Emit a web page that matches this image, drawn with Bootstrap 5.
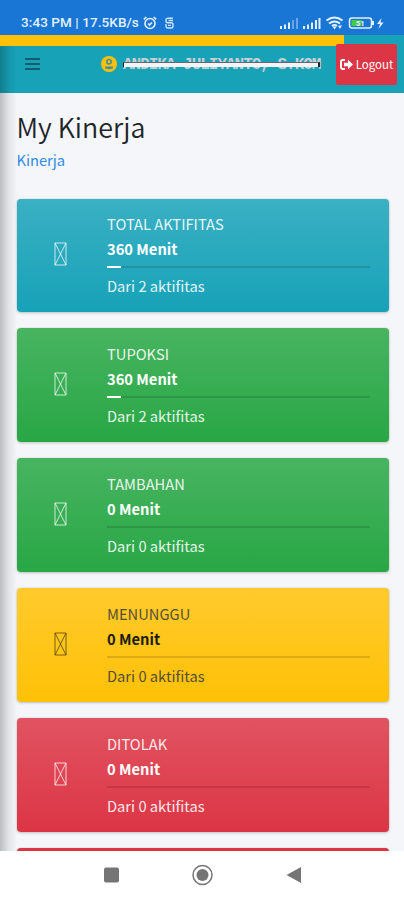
<!DOCTYPE html>
<html lang="id">
<head>
<meta charset="utf-8">
<meta name="viewport" content="width=device-width, initial-scale=1">
<title>My Kinerja</title>
<link href="https://cdn.jsdelivr.net/npm/bootstrap@5.3.0/dist/css/bootstrap.min.css" rel="stylesheet">
<style>
body{font-family:"Noto Sans CJK JP","Noto Sans",sans-serif;background:#f4f6f9;color:#212529;height:900px;overflow:hidden}
.screen{width:404px;height:900px;overflow:hidden}
.statusbar{height:35px;background:#1976d5;color:#e4f0fc;padding:10px 20px 0 21px;font:500 13.5px/25px Roboto,sans-serif}
.clock{letter-spacing:.08px;width:118px}
.statusbar svg{flex:none}
.sim{margin-left:8px}
.topbar{height:58px;background:#17a2b8}
.loading{left:0;top:0;width:344px;height:11px;background:#ffc107}
.menu-btn{margin-left:25px;width:15px;margin-bottom:1px}
.avatar{margin-left:61px}
.user-name{font:700 16px/20px "Liberation Mono",monospace;color:#c6cfd2;width:197px;height:20px;margin-left:6px;letter-spacing:-1.02px;padding-top:1px}
.redact{left:0;right:0;top:8px;height:5px;background:#f4f4f4;border-right:2px solid #222;border-left:1px solid #222;border-top:1px solid #667}
.logout{width:61px;height:41px;margin:0 7px 0 0;background:#dc3545;border-radius:2px;color:#fff;font-size:11.5px;line-height:20px}
.logout svg{margin-right:3px}
.content-area{height:758px;padding:0 15px 0 16.5px;background:#f4f6f9}
.edge{left:0;top:46px;width:17px;height:805px;background:linear-gradient(90deg,rgba(0,0,0,.23),rgba(0,0,0,.08) 50%,transparent)}
h1{font-size:26.8px;line-height:34px;font-weight:350;margin:0;padding-top:17px}
.crumb{font-size:14.7px;line-height:24px;color:#2f8be6;text-decoration:none;margin-top:4px;display:block}
.stats{margin-top:26.5px}
.info{height:113.5px;margin-bottom:16.4px;border-radius:4px;padding-left:90.5px;padding-right:19px;padding-top:12.5px;color:#fff;box-shadow:0 0 1px rgba(0,0,0,.3),0 1px 3px rgba(0,0,0,.2)}
.teal{background:linear-gradient(#3ab0c3,#17a2b8)}
.grn{background:linear-gradient(#48b461,#28a745)}
.ylw{background:linear-gradient(#ffca2c,#ffc107);color:#1f2d3d}
.rd{background:linear-gradient(#e15361,#dc3545)}
.info .soft{opacity:.88}
.ylw .soft{opacity:.78}
.t1,.t2,.t3{font-size:14.7px;line-height:25px}
.t2{font-weight:700}
.ylw .t2{color:#1b1b10}
.bar{height:2px;margin-top:5px;border-radius:0;background:rgba(0,0,0,.125)}
.bar .progress-bar{background:#fff}
.t3{margin-top:5px}
.glyph{left:37.5px;top:43.5px}
.last-card{background:#dc3545}
.navkeys{height:49px;background:#fff}
</style>
<script src="https://cdn.jsdelivr.net/npm/bootstrap@5.3.0/dist/js/bootstrap.bundle.min.js"></script>
</head>
<body>
<div class="screen position-relative">
  <div class="statusbar d-flex align-items-center">
    <span class="clock text-nowrap">3:43 PM | 17.5KB/s</span>
    <svg class="ms-1" width="14" height="14" viewBox="0 0 14 14" fill="none" stroke="#e4f0fc" stroke-width="1.6"><circle cx="7" cy="7.5" r="5"/><path d="M.8 3.3 3.4 1M13.2 3.3 10.6 1M5.2 7.5 6.5 9 9 6.5"/></svg>
    <svg class="sim" width="9" height="12" viewBox="0 0 9 12" fill="none" stroke="#cfe3f8" stroke-width="1.4"><path d="M8 1.2H3Q1 1.200 1 3v1q0 1.800 2 1.800h3q2 0 2 2V9q0 2-2 2H3Q1 11 1 9V7M3.500 3.500H8M3 8.400h3"/></svg>
    <svg class="ms-auto" width="104" height="16" viewBox="0 0 104 16">
      <g fill="#e4f0fc"><path d="M0 11h2v3H0zM4 9.500h2V14H4zM8 7.500h2V14H8z"/><path opacity=".4" d="M12 5h2v9h-2zM16 3h2v11h-2z"/><path d="M23 11h2v3h-2zM27 9.500h2V14h-2zM31 7.500h2V14h-2zM35 5h2v9h-2zM38.500 3h2v11h-2z"/></g>
      <g fill="none" stroke="#e4f0fc" stroke-width="2.100"><path d="M46.500 5.500q8-6 16 0M49 8.500q5.500-4 11 0M52 11q2.500-2 5 0"/></g><path d="M52.500 11.500h4l-2 3zM58 11l4-1-2 4z" fill="#e4f0fc"/>
      <rect x="69.500" y="3" width="22" height="10" rx="2.500" fill="none" stroke="#e4f0fc" stroke-width="1.500"/><path d="M92 6h2v4h-2z" fill="#e4f0fc"/><rect x="71.500" y="5" width="10" height="6" fill="#43c94c"/><text x="76" y="11" font-size="7.500" font-weight="700" fill="#e4f0fc">51</text><path d="M101.500 3 97 9h3l-1.500 5 5-6.500h-3z" fill="#e4f0fc"/>
    </svg>
  </div>
  <nav class="topbar position-relative d-flex align-items-center">
    <div class="loading position-absolute"></div>
    <svg class="menu-btn" width="15" height="14" viewBox="0 0 15 14" stroke="#125e6e" stroke-width="2"><path d="M0 2h15M0 7h15M0 12h15"/></svg>
    <svg class="avatar" width="16" height="16" viewBox="0 0 16 16"><circle cx="8" cy="8" r="8" fill="#ffc107"/><circle cx="8" cy="5.700" r="2.200" fill="none" stroke="#43919a" stroke-width="1.600"/><path d="M4 10.500h8v1.800q-4 2-8 0z" fill="#43919a"/></svg>
    <div class="user-name position-relative text-nowrap">ANDIKA JULIYANTO, S.KOM<span class="redact position-absolute"></span></div>
    <a class="logout position-relative ms-auto d-flex align-items-center justify-content-center text-decoration-none" href="#"><svg width="13" height="11" viewBox="0 0 13 11"><path d="M5 1H2.500Q1 1 1 2.500v6Q1 10 2.500 10H5" fill="none" stroke="#fff" stroke-width="1.900"/><path d="M4 3.700h4V.8L13 5.500 8 10.200V7.300H4z" fill="#fff"/></svg>Logout</a>
  </nav>
  <main class="content-area overflow-hidden">
    <h1>My Kinerja</h1>
    <a class="crumb" href="#">Kinerja</a>
    <div class="stats">
      <div class="info teal position-relative"><svg class="glyph position-absolute" width="13" height="24" viewBox="0 0 13 24" fill="none" stroke="#fff" stroke-opacity=".75"><path d="M1 1h11v22H1zM1 1l11 22M12 1 1 23"/></svg><div class="t1 soft">TOTAL AKTIFITAS</div><div class="t2">360 Menit</div><div class="progress bar"><div class="progress-bar" style="width:5.2%"></div></div><div class="t3 soft">Dari 2 aktifitas</div></div>
      <div class="info grn position-relative"><svg class="glyph position-absolute" width="13" height="24" viewBox="0 0 13 24" fill="none" stroke="#fff" stroke-opacity=".75"><path d="M1 1h11v22H1zM1 1l11 22M12 1 1 23"/></svg><div class="t1 soft">TUPOKSI</div><div class="t2">360 Menit</div><div class="progress bar"><div class="progress-bar" style="width:5.2%"></div></div><div class="t3 soft">Dari 2 aktifitas</div></div>
      <div class="info grn position-relative"><svg class="glyph position-absolute" width="13" height="24" viewBox="0 0 13 24" fill="none" stroke="#fff" stroke-opacity=".75"><path d="M1 1h11v22H1zM1 1l11 22M12 1 1 23"/></svg><div class="t1 soft">TAMBAHAN</div><div class="t2">0 Menit</div><div class="progress bar"></div><div class="t3 soft">Dari 0 aktifitas</div></div>
      <div class="info ylw position-relative"><svg class="glyph position-absolute" width="13" height="24" viewBox="0 0 13 24" fill="none" stroke="#4a3d12" stroke-opacity=".75"><path d="M1 1h11v22H1zM1 1l11 22M12 1 1 23"/></svg><div class="t1 soft">MENUNGGU</div><div class="t2">0 Menit</div><div class="progress bar"></div><div class="t3 soft">Dari 0 aktifitas</div></div>
      <div class="info rd position-relative"><svg class="glyph position-absolute" width="13" height="24" viewBox="0 0 13 24" fill="none" stroke="#fff" stroke-opacity=".75"><path d="M1 1h11v22H1zM1 1l11 22M12 1 1 23"/></svg><div class="t1 soft">DITOLAK</div><div class="t2">0 Menit</div><div class="progress bar"></div><div class="t3 soft">Dari 0 aktifitas</div></div>
      <div class="info last-card"></div>
    </div>
    <div class="edge position-absolute"></div>
  </main>
  <div class="navkeys position-relative">
    <svg class="d-block" width="404" height="49" viewBox="0 0 404 49"><rect x="104" y="16.500" width="15" height="15" rx="2" fill="#757575"/><circle cx="202.500" cy="24" r="9.500" fill="none" stroke="#757575" stroke-width="1.500"/><circle cx="202.500" cy="24" r="6" fill="#757575"/><path d="M286.500 24 301 16v16z" fill="#757575"/></svg>
  </div>
</div>
</body>
</html>
